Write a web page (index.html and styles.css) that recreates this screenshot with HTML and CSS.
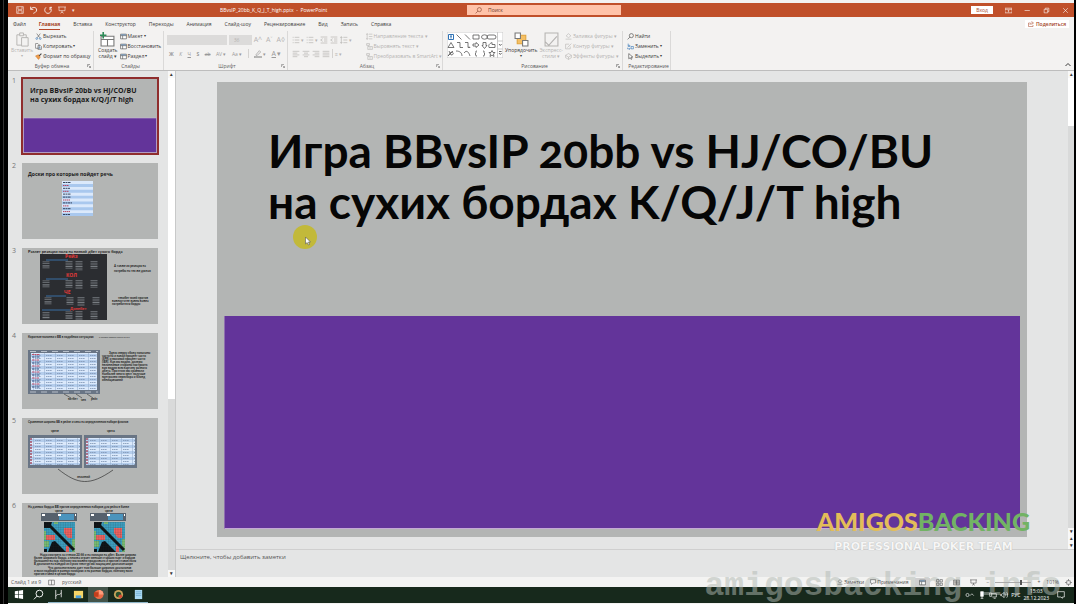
FILE: index.html
```html
<!DOCTYPE html>
<html lang="ru">
<head>
<meta charset="utf-8">
<title>BBvsIP_20bb_K_Q_J_T_high.pptx - PowerPoint</title>
<link rel="stylesheet" href="styles.css">
</head>
<body>
<svg class="defs" aria-hidden="true">
  <defs>
    <pattern id="rows" width="11" height="6" patternUnits="userSpaceOnUse">
      <rect width="11" height="3" fill="#dbe9fb"/><rect y="3" width="11" height="3" fill="#b4cdec"/>
      <path d="M2 1.500h6M2 4.500h6" stroke="#7e93b3" stroke-width=".8" stroke-dasharray="1.400 .4"/><path d="M.5 0v6" stroke="#8fa6c6" stroke-width=".5"/>
    </pattern>
    <pattern id="cells" width="2.400" height="2.400" patternUnits="userSpaceOnUse">
      <path d="M0 0h2.400M0 0v2.400" stroke="#1d2a30" stroke-width=".5" opacity=".5"/>
    </pattern>
    <symbol id="i-cut" viewBox="0 0 12 12"><path d="M3 1l5 7M9 1L4 8" stroke="#555"/><g stroke="#2f72b5"><circle cx="3" cy="9.500" r="1.500"/><circle cx="9" cy="9.500" r="1.500"/></g></symbol>
    <symbol id="i-copy" viewBox="0 0 12 12"><path d="M1 1h4l2 2v6H1zM5 4h4l2 2v5H5z" stroke="#555" fill="#fff"/><path d="M6.500 7h3M6.500 9h3" stroke="#2f72b5"/></symbol>
    <symbol id="i-brush" viewBox="0 0 12 12"><path d="M1 5l5-2 3 4-3 4z" fill="#ee9c4c" stroke="#d07a2a"/><path d="M7 5l4-4" stroke="#444" stroke-width="2"/></symbol>
    <symbol id="i-paste" viewBox="0 0 14 16"><path d="M4 3H1v11h5M8 3h3v3M4 1h4v3H4z"/><path d="M6 6h7v9H6z"/></symbol>
    <symbol id="i-new" viewBox="0 0 14 14"><path d="M1 4h12v9H1zM1 7h12M7 7v6" stroke="#777" fill="#fff"/><path d="M3 0v6M0 3h6" stroke="#2d8a57" stroke-width="1.500"/></symbol>
    <symbol id="i-layout" viewBox="0 0 12 12"><path d="M1 2h10v8H1zM1 4.500h10M4.500 4.500V10" stroke="#444" fill="#fff"/><path d="M2 3.200h8" stroke="#2f72b5"/></symbol>
    <symbol id="i-align" viewBox="0 0 12 12"><path d="M1 2h10M1 4.700h7M1 7.400h10M1 10h7"/></symbol>
    <symbol id="i-center" viewBox="0 0 12 12"><path d="M1 2h10M3 4.700h6M1 7.400h10M3 10h6"/></symbol>
    <symbol id="i-right" viewBox="0 0 12 12"><path d="M1 2h10M4 4.700h7M1 7.400h10M4 10h7"/></symbol>
    <symbol id="i-justify" viewBox="0 0 12 12"><path d="M1 2h10M1 4.700h10M1 7.400h10M1 10h10"/></symbol>
    <symbol id="i-list" viewBox="0 0 12 12"><path d="M4 2h7M4 6h7M4 10h7M1 2h1.500M1 6h1.500M1 10h1.500"/></symbol>
    <symbol id="i-indent" viewBox="0 0 12 12"><path d="M1 1.500h10M6 4.500h5M6 7.500h5M1 10.500h10M4 4L1 6l3 2"/></symbol>
    <symbol id="i-spacing" viewBox="0 0 12 12"><path d="M5 2h6M5 6h6M5 10h6M2 1v10M.5 3L2 1l1.500 2M.5 9L2 11l1.500-2"/></symbol>
    <symbol id="i-smart" viewBox="0 0 12 12"><path d="M1 1h5v3H1zM3 6h8v5H3zM5 8.500h4M4 4v2"/></symbol>
    <symbol id="i-arrange" viewBox="0 0 14 14"><path d="M3 3h8v8H3z" fill="#f5c065" stroke="#e0a53f"/><path d="M1 1h5v5H1zM8 8h5v5H8z" fill="#fff" stroke="#777"/></symbol>
    <symbol id="i-style" viewBox="0 0 14 14"><path d="M1 1h12v12H1zM4 13l8-9M1 9l4 4"/></symbol>
    <symbol id="i-fill" viewBox="0 0 12 12"><path d="M2 5l4-4 4 4-4 3zM1 10.500h10"/></symbol>
    <symbol id="i-outline" viewBox="0 0 12 12"><path d="M9 6v4H1V2h6M4 8l7-7"/></symbol>
    <symbol id="i-effect" viewBox="0 0 12 12"><path d="M1 4l5-3 5 3-5 3zM1 4v4l5 3 5-3V4M6 7v4"/></symbol>
    <symbol id="i-find" viewBox="0 0 12 12"><circle cx="7.500" cy="4.500" r="3.500"/><path d="M5 7l-4 4"/></symbol>
    <symbol id="i-replace" viewBox="0 0 12 12"><path d="M2 1v5M2 4h3v2H2M7 6h4v4H7zM1 8v2h4M4 8.500L5.500 10 4 11.500" stroke="#2f72b5"/></symbol>
    <symbol id="i-select" viewBox="0 0 12 12"><path d="M3 1v9l2.500-2L7 11l1.500-1L7 7h3z" fill="#fff"/></symbol>
    <symbol id="i-launch" viewBox="0 0 8 8"><path d="M1 6V1h5M3 3l4 4M7 4v3H4"/></symbol>
    <symbol id="i-pen" viewBox="0 0 12 12"><path d="M3 7l5-6 2 2-5 5H3z"/><path d="M0 10.500h12" stroke-width="2"/></symbol>
    <symbol id="i-screen" viewBox="0 0 12 12"><path d="M0 1.500h12M1.500 1.500V7h9V1.500M6 7v3M3.500 11L6 9l2.500 2"/></symbol>
  </defs>
</svg>

<div class="app">
  <header class="titlebar">
    <div class="quick">
      <button aria-label="Сохранить"><svg class="ic7" viewBox="0 0 12 12"><path d="M1 1h10v10H1zM3 1v4h6V1M3 11V7h6v4"/></svg></button>
      <button aria-label="Отменить"><svg class="ic7" viewBox="0 0 12 12"><path d="M1 1v4h4M1 5c2-4 9-4 9 1 0 3-3 4-5 5" stroke-width="1.500"/></svg></button>
      <button aria-label="Повторить"><svg class="ic7" viewBox="0 0 12 12"><path d="M3 2C-1 6 2 11 6 11s7-5 3-9M9 6V2h3" stroke-width="1.500"/></svg></button>
      <button aria-label="С начала"><svg class="ic7"><use href="#i-screen"/></svg></button>
      <button aria-label="Настройка панели">▾</button>
    </div>
    <div class="doc">BBvsIP_20bb_K_Q_J_T_high.pptx&nbsp; - &nbsp;PowerPoint</div>
    <label class="search"><svg class="ic6"><use href="#i-find"/></svg><input type="text" placeholder="Поиск" aria-label="Поиск"></label>
    <div class="win">
      <button class="login">Вход</button>
      <button aria-label="Параметры ленты"><svg class="ic6" viewBox="0 0 12 12"><path d="M0 2h12v8H0zM0 4h12M6 9V6M4.500 7L6 5.500 7.500 7"/></svg></button>
      <button aria-label="Свернуть"><svg class="ic6" viewBox="0 0 12 12"><path d="M1 6h9"/></svg></button>
      <button aria-label="Восстановить окно"><svg class="ic6" viewBox="0 0 12 12"><path d="M2 4h6v6H2zM4 4V2h6v6H8"/></svg></button>
      <button aria-label="Закрыть"><svg class="ic6" viewBox="0 0 12 12"><path d="M2 2l8 8M10 2l-8 8"/></svg></button>
    </div>
  </header>

  <nav class="tabs">
    <button>Файл</button><button class="on">Главная</button><button>Вставка</button><button>Конструктор</button><button>Переходы</button><button>Анимация</button><button>Слайд-шоу</button><button>Рецензирование</button><button>Вид</button><button>Запись</button><button>Справка</button>
    <button class="share"><svg class="ic5" viewBox="0 0 12 12"><path d="M5 4H1v7h9V8M4 8c0-3 2-4 5-4M7 1l4 3-4 3"/></svg>Поделиться</button>
  </nav>

  <section class="ribbon">
    <div class="group clip">
      <div class="body">
        <button class="big off"><svg class="ic14"><use href="#i-paste"/></svg><span>Вставить</span><i>▾</i></button>
        <div class="stack">
          <button><svg class="ic6"><use href="#i-cut"/></svg>Вырезать</button>
          <button><svg class="ic6"><use href="#i-copy"/></svg>Копировать <i>▾</i></button>
          <button><svg class="ic6"><use href="#i-brush"/></svg>Формат по образцу</button>
        </div>
      </div>
      <footer>Буфер обмена<svg class="launch"><use href="#i-launch"/></svg></footer>
    </div>
    <div class="group slides">
      <div class="body">
        <button class="big"><svg class="ic14"><use href="#i-new"/></svg><span>Создать<br>слайд ▾</span></button>
        <div class="stack">
          <button><svg class="ic6"><use href="#i-layout"/></svg>Макет <i>▾</i></button>
          <button><svg class="ic6"><use href="#i-layout"/></svg>Восстановить</button>
          <button><svg class="ic6"><use href="#i-layout"/></svg>Раздел <i>▾</i></button>
        </div>
      </div>
      <footer>Слайды</footer>
    </div>
    <div class="group font off">
      <div class="body two">
        <div class="line">
          <select class="face" aria-label="Шрифт"><option></option></select>
          <select class="size" aria-label="Размер шрифта"><option>36</option></select>
          <button class="l">A^</button><button class="l">A˅</button><button class="l">A◊</button>
        </div>
        <div class="line spread">
          <button><b>Ж</b></button><button><em>К</em></button><button><u>Ч</u></button><button><b>S</b></button><button><s>ab</s></button><button>AV ▾</button><button>Aa ▾</button><hr>
          <button><svg class="ic7"><use href="#i-pen"/></svg> ▾</button><button class="l"><u>A</u> ▾</button>
        </div>
      </div>
      <footer>Шрифт<svg class="launch"><use href="#i-launch"/></svg></footer>
    </div>
    <div class="group para off">
      <div class="body">
        <div class="two">
          <div class="line">
            <button><svg class="ic7"><use href="#i-list"/></svg> ▾</button><button><svg class="ic7"><use href="#i-list"/></svg> ▾</button><button><svg class="ic7"><use href="#i-indent"/></svg></button><button><svg class="ic7"><use href="#i-indent"/></svg></button><button><svg class="ic7"><use href="#i-spacing"/></svg> ▾</button>
          </div>
          <div class="line">
            <button><svg class="ic7"><use href="#i-align"/></svg></button><button><svg class="ic7"><use href="#i-center"/></svg></button><button><svg class="ic7"><use href="#i-right"/></svg></button><button><svg class="ic7"><use href="#i-justify"/></svg></button><hr><button>≡ ▾</button>
          </div>
        </div>
        <div class="stack">
          <button><svg class="ic6"><use href="#i-spacing"/></svg>Направление текста ▾</button>
          <button><svg class="ic6"><use href="#i-smart"/></svg>Выровнять текст ▾</button>
          <button><svg class="ic6"><use href="#i-smart"/></svg>Преобразовать в SmartArt ▾</button>
        </div>
      </div>
      <footer>Абзац<svg class="launch"><use href="#i-launch"/></svg></footer>
    </div>
    <div class="group draw">
      <div class="body">
        <svg class="gallery" viewBox="0 0 56 26" role="img" aria-label="Фигуры">
          <path d="M0 0h56v26H0z" fill="#fff" stroke="#c9c9c9"/>
          <path d="M1.500 2.500h5v5h-5zM3 4h2M4 4v2.500" stroke="#2f72b5"/>
          <path d="M9.500 2.500l5 5M18 2.500l5 5M26 3h6v4h-6zM42 3h5a2 2 0 010 4h-5a2 2 0 010-4zM4 10.500l3 5H1zM10 10.500h3v5h3M18 10.500h3v5h2l-1-1M26 12h3v-1.500l3 2.500-3 2.500V14h-3zM36 10.500h3v3h1l-2.500 3-2.500-3h1zM42 15.500c-1-3 1-4 3-5v2h3v3zM2 19l2 4c3 0 3-3 0-3l-3 4M6 19l-5 5M9 19c4 0 6 2 6 5M17 21c3-4 5 0 6 3M30 19c-2 0-1 1-1 2l-1 1 1 1c0 1-1 1 1 1M36 19c2 0 1 1 1 2l1 1-1 1c0 1 1 1-1 1M45 18.500l1 2h2l-1.500 1.500.5 2.500-2-1.500-2 1.500.5-2.500L42 20.500h2z" stroke="#555" stroke-width=".8"/>
          <ellipse cx="37.500" cy="5" rx="3" ry="2.200" stroke="#555" stroke-width=".8"/>
          <path d="M50.500 0v26M50.500 9H56M50.500 17H56" stroke="#c9c9c9"/><path d="M52 12l1.300 1.500L54.600 12M52 21l1.300 1.500L54.600 21M52 19.500h2.600" stroke="#444" stroke-width=".8"/>
        </svg>
        <button class="big"><svg class="ic14"><use href="#i-arrange"/></svg><span>Упорядочить</span><i>▾</i></button>
        <button class="big off"><svg class="ic14"><use href="#i-style"/></svg><span>Экспресс-<br>стили ▾</span></button>
        <div class="stack off">
          <button><svg class="ic6"><use href="#i-fill"/></svg>Заливка фигуры ▾</button>
          <button><svg class="ic6"><use href="#i-outline"/></svg>Контур фигуры ▾</button>
          <button><svg class="ic6"><use href="#i-effect"/></svg>Эффекты фигуры ▾</button>
        </div>
      </div>
      <footer>Рисование<svg class="launch"><use href="#i-launch"/></svg></footer>
    </div>
    <div class="group edit">
      <div class="body">
        <div class="stack">
          <button><svg class="ic6"><use href="#i-find"/></svg>Найти</button>
          <button><svg class="ic6"><use href="#i-replace"/></svg>Заменить <i>▾</i></button>
          <button><svg class="ic6"><use href="#i-select"/></svg>Выделить <i>▾</i></button>
        </div>
      </div>
      <footer>Редактирование</footer>
    </div>
    <button class="collapse" aria-label="Свернуть ленту"><svg class="ic5" viewBox="0 0 12 12"><path d="M1 8l5-5 5 5" stroke-width="2"/></svg></button>
  </section>

  <main class="work">
    <aside class="panel">
      <ol class="thumbs">
        <li><span>1</span>
          <svg class="thumb on" viewBox="0 0 136 76"><path class="paper" d="M0 0h136v76H0z"/>
            <text class="t7" x="8" y="15">Игра BBvsIP 20bb vs HJ/CO/BU</text><text class="t7" x="8" y="24">на сухих бордах K/Q/J/T high</text>
            <path d="M1.500 40h133v34.500h-133z" fill="#63349a" stroke="#c9b5d6" stroke-width=".6"/></svg></li>
        <li><span>2</span>
          <svg class="thumb" viewBox="0 0 136 76"><path class="paper" d="M0 0h136v76H0z"/>
            <text class="t5" x="6" y="13">Доски про которые пойдет речь</text>
            <path d="M40 18h31v35H40z" fill="#dbe9fb"/><path d="M40 22.500h31M40 28.300h31M40 34.100h31M40 39.900h31M40 45.700h31M40 51.500h31" stroke="#a9c8ee" stroke-width="2.900"/>
            <path d="M41 19.500h8M41 25.300h7M41 31.100h8M41 34.100h8M41 39.900h9M41 45.700h8M41 51.500h7" stroke="#34435c" stroke-dasharray="2 .5"/><path d="M41 22.500h6M41 28.300h6M41 37h7M41 42.900h6M41 48.600h7" stroke="#b3435c" stroke-dasharray="1.500 .5"/></svg></li>
        <li><span>3</span>
          <svg class="thumb" viewBox="0 0 136 76"><path class="paper" d="M0 0h136v76H0z"/>
            <text class="t4" x="6" y="5">Разлет реакции поля на низкий дбет сухого борда</text>
            <path d="M18 6h67v66H18z" fill="#2b2d31"/>
            <text class="t5 red" x="43" y="10">Рейз</text><text class="t5 red" x="44" y="29">КОЛ</text><text class="t5 red" x="42" y="46">ЧЕ</text><text class="t4 red" x="48" y="62">Доннбет</text>
            <path d="M24 12h22M24 31h22M24 48h20M20 62h28" stroke="#3d7fc0" stroke-width=".8"/>
            <path d="M24 13.500v7M47 13v8M57 13v10M72 13v8M24 32.500v7M47 32v8M57 32v9M72 32v8M26 49.500v7M48 49v8M59 49v9M74 49v8M24 64v7M47 63.500v8M57 63v9M72 63v8" stroke="#aab0b8" stroke-width="7" stroke-dasharray=".8 .9" opacity=".6"/>
            <text class="t3" x="92" y="19">А также их реакция на</text><text class="t3" x="92" y="24">потребы на тех же досках</text><text class="t3" x="96" y="51">текибет моей против</text><text class="t3" x="90" y="54">важности не важна важна</text><text class="t3" x="90" y="57">потребителя борды</text></svg></li>
        <li><span>4</span>
          <svg class="thumb" viewBox="0 0 136 76"><path class="paper" d="M0 0h136v76H0z"/>
            <text class="t3" x="6" y="5">Короткие колонки с ВВ в подобных ситуациях</text><text class="t2" x="77" y="5">в пример возможностей из SPR</text>
            <path d="M6 17h72v44H6z" fill="#697585"/><path d="M9 20h66v37H9z" fill="url(#rows)"/><path d="M10 21.500h8M10 27h7M10 33h8M10 39h8M10 45h7M10 51h8" stroke="#c35068" stroke-dasharray="2 .5"/><path d="M10 24h8M10 30h8M10 36h7M10 42h8M10 48h8M10 54h8" stroke="#2e4b7c" stroke-dasharray="2 .5"/>
            <path d="M8 18.500h68M8 59h68" stroke="#ccd2da" stroke-width=".8" stroke-dasharray="6 5"/><path d="M42 61l7 4M54 61l6 4M65 61l6 4" stroke="#333" stroke-width=".6"/>
            <text class="t3" x="46" y="67">котбет</text><text class="t3" x="59" y="68">чек</text><text class="t3" x="69" y="67">рейз</text>
            <text class="t3" x="87" y="21">Здесь сверху сбоку показаны</text><text class="t3" x="80" y="24">частоты и какой процент часто</text><text class="t3" x="80" y="27">(SPR) и высокой процент части</text><text class="t3" x="80" y="30">(IBR). Как мы видим, дилеры</text><text class="t3" x="80" y="33">нелинейные стороны построить</text><text class="t3" x="80" y="36">вам видим всю картину разного</text><text class="t3" x="80" y="39">дбета. При этом мы сравнили</text><text class="t3" x="80" y="42">наиболее много мест получше</text><text class="t3" x="80" y="45">контролем пересбора и блинд</text><text class="t3" x="80" y="48">обнищавшими</text></svg></li>
        <li><span>5</span>
          <svg class="thumb" viewBox="0 0 136 76"><path class="paper" d="M0 0h136v76H0z"/>
            <text class="t3" x="6" y="5">Сравнение ширины ББ в рейзе и чека на определенном наборе флопов</text>
            <text class="t3" x="29" y="14">чрезе</text><text class="t3" x="85" y="14">чреза</text>
            <path d="M6 17h54v33H6zM62 17h53v33H62z" fill="#697585"/><path d="M8 20h50v27H8zM64 20h49v27H64z" fill="url(#rows)"/><path d="M9 20v27M65 20v27" stroke="#a34d63" stroke-width="1.500" stroke-dasharray="2 1"/>
            <path d="M36 51c20 16 32 17 55 1" stroke="#333" stroke-width=".7"/><text class="t3" x="55" y="60">значений</text></svg></li>
        <li><span>6</span>
          <svg class="thumb" viewBox="0 0 136 76"><path class="paper" d="M0 0h136v76H0z"/>
            <text class="t3" x="6" y="5">На данных бордах ВВ против определенных наборов для рейза в банке</text>
            <path d="M19 10h36v8H19zM68 10h36v8H68z" fill="#56616d"/><path d="M37 11h15v6H37zM86 11h15v6H86z" fill="#4b94bd"/><path d="M20 12h3M36 12h3M53 12h1M69 12h3M85 12h3M102 12h1" stroke="#fff" stroke-width="2"/>
            <text class="t3" x="33" y="9">чрезе</text><text class="t3" x="83" y="9">чрезе</text>
            <g id="range"><path d="M22 19h31v30H22z" fill="#3d9fc0"/><path d="M22 19h8l-2 6h-6zM33 38l11 11H26l2-5 2-5zM22 46h3v3h-3z" fill="#0d1114"/><path d="M42 25h8v10h-4l-4-5zM24 32h9v5h-9zM44 43h3v6h-3z" fill="#f0625f"/><path d="M22 38h5v6h-5zM50 36h3v13h-3zM22 28h2v9h-2zM32 19h4v2h-4z" fill="#79bd73"/><path d="M27 22l25 25" stroke="#0d1114" stroke-width="3"/><path d="M22 19h31v30H22z" fill="url(#cells)"/></g>
            <use href="#range" x="50"/>
            <text class="t3" x="18" y="53">Надо смотреть за стеком 20 бб и на позиции на дбет. Более широко</text><text class="t3" x="12" y="56">более широкого борда, а кнопка играет меньше старших карт и бордов</text><text class="t3" x="12" y="59">большинства пар, поэтому мы можем продолжать и против ставок поля</text><text class="t3" x="12" y="62">В диапазон на каждой из сухих текстур мы защищаем диапазон шире</text><text class="t3" x="26" y="66">Что дополнительно дает нам больше широких диапазонов</text><text class="t3" x="12" y="69">и колл подборы в разных позициях и на разных бордах, поэтому колл</text><text class="t3" x="12" y="72">против ставки в целом борда</text></svg></li>
      </ol>
      <div class="scroll"><b>▴</b><i></i><b>▾</b></div>
    </aside>

    <section class="editor">
      <div class="stage">
        <article class="slide">
          <h1>Игра BBvsIP 20bb vs HJ/CO/BU<br>на сухих бордах K/Q/J/T high</h1>
          <div class="block"></div>
        </article>
        <div class="vscroll"><b>▴</b><i></i><span></span><b>▾</b><b>▴</b><b>▾</b></div>
      </div>
      <div class="notes">Щелкните, чтобы добавить заметки</div>
    </section>
  </main>

  <div class="status">
    <span>Слайд 1 из 9</span>
    <svg class="ic6" viewBox="0 0 12 12"><path d="M1 2h10v8H1zM6 2v8"/></svg>
    <span>русский</span>
    <div class="right">
      <button><svg class="ic5"><use href="#i-fill"/></svg>Заметки</button>
      <button><svg class="ic5" viewBox="0 0 12 12"><path d="M1 1h10v7H6l-3 3V8H1z"/></svg>Примечания</button>
      <div class="views">
        <button class="on" aria-label="Обычный"><svg class="ic6"><use href="#i-layout"/></svg></button>
        <button aria-label="Сортировщик"><svg class="ic6" viewBox="0 0 12 12"><path d="M1 1h4v4H1zM7 1h4v4H7zM1 7h4v4H1zM7 7h4v4H7z"/></svg></button>
        <button aria-label="Чтение"><svg class="ic6" viewBox="0 0 12 12"><path d="M1 2h10v8H1zM6 2v8M2 5h8M2 7h8"/></svg></button>
        <button aria-label="Слайд-шоу"><svg class="ic6"><use href="#i-screen"/></svg></button>
      </div>
      <span>−</span><input type="range" value="72" aria-label="Масштаб"><span>+</span><span>101%</span>
      <svg class="ic6" viewBox="0 0 12 12"><path d="M3 3h6v6H3zM6 0v3M6 9v3M0 6h3M9 6h3"/></svg>
    </div>
  </div>
</div>

<footer class="taskbar">
  <div class="apps">
    <button aria-label="Пуск"><svg viewBox="0 0 12 12"><path d="M2 2.500L5.500 2v3.700H2zM6.200 1.900L11 1v4.700H6.200zM2 6.300h3.500V10L2 9.500zM6.200 6.300H11V11l-4.800-.9z" fill="#fff" stroke="none"/></svg></button>
    <button aria-label="Поиск"><svg viewBox="0 0 12 12"><circle cx="7" cy="5" r="3.700" stroke="#fff"/><path d="M4.500 7.700L1 11.300" stroke="#fff"/></svg></button>
    <button class="run" aria-label="Hand2Note"><svg viewBox="0 0 12 12"><path d="M3 1v10M3 8c2-4 4 0 6-4M9 1v8" stroke="#ddd"/></svg></button>
    <button class="run" aria-label="Проводник"><svg viewBox="0 0 12 12"><path d="M1 2h10v8H1z" fill="#f7d667" stroke="none"/><path d="M3 7h6v3H3z" fill="#4ba0dc" stroke="none"/></svg></button>
    <button class="run on" aria-label="PowerPoint"><svg viewBox="0 0 12 12"><circle cx="6.500" cy="6" r="5" fill="#ed6c47" stroke="none"/><path d="M6.500 1a5 5 0 015 5h-5z" fill="#ff9c7c" stroke="none"/><path d="M1 3.500h5v5H1z" fill="#c43e1c" stroke="none"/></svg></button>
    <button class="run" aria-label="Запись экрана"><svg viewBox="0 0 12 12"><circle cx="6" cy="6" r="5" fill="#c7a45a" stroke="none"/><circle cx="6" cy="6" r="3" fill="#27502c" stroke="none"/><circle cx="8" cy="8" r="2" fill="#d84a35" stroke="none"/></svg></button>
    <button class="run" aria-label="Блокнот"><svg viewBox="0 0 12 12"><path d="M2 1h8v10H2z" fill="#a9d8f2" stroke="none"/><path d="M3 3h6M3 5h6M3 7h6" stroke="#5c9cc4" stroke-width=".6"/></svg></button>
  </div>
  <div class="tray">
    <svg viewBox="0 0 16 12"><circle cx="4" cy="6" r="2.500"/><path d="M8 7l3-3 3 3"/></svg>
    <svg class="ic8" viewBox="0 0 12 12"><path d="M4 1h4v7H4z" fill="#fff"/><path d="M6 8v3M4 11h4"/></svg>
    <svg class="ic8" viewBox="0 0 12 12"><path d="M1 3h3v5H1zM4 4h7v5H5M7 11h3"/></svg>
    <svg class="ic8" viewBox="0 0 12 12"><path d="M1 5h2l3-3v8L3 7H1zM8 4c1 1 1 3 0 4M10 2c2 2 2 6 0 8"/></svg>
    <span>РУС</span>
    <time>15:03<br>28.12.2023</time>
    <svg class="ic8 bell" viewBox="0 0 12 12"><path d="M1 1h10v8H8v2L6 9H1z"/></svg>
  </div>
</footer>

<div class="brand"><div class="logo"><span>AMIGOS</span><span class="green">BACKING</span></div><div class="team">PROFESSIONAL POKER TEAM</div></div>
<div class="site">amigosbacking info</div>
<svg class="pointer" viewBox="0 0 24 24"><circle cx="12" cy="12" r="12" fill="#c2b93a"/><path d="M12.500 12v7l1.700-1.500L15.500 20l1-.5-1-2.500h2z" fill="#fff" stroke="#555" stroke-width=".6"/></svg>
</body>
</html>
```

FILE: styles.css
```css
* { box-sizing: border-box; }
body {
  margin: 0;
  height: 100vh;
  padding: 3px 2px 1px 8px;
  display: flex;
  flex-direction: column;
  overflow: hidden;
  position: relative;
  background: linear-gradient(90deg, #000 0 3px, #333 3px 4px, #000 4px 8px, #f3f2f1 8px calc(100% - 2px), #000 calc(100% - 2px));
  font-family: "Open Sans", "Noto Sans", sans-serif;
  font-size: 5px;
  line-height: 6px;
  color: #3b3a39;
}
button, select, input {
  font: inherit;
  color: inherit;
  background: none;
  border: 0;
  padding: 0;
  margin: 0;
  appearance: none;
}
button { display: flex; align-items: center; gap: 1px; white-space: nowrap; }
i { font-style: normal; font-size: 4px; }
svg { fill: none; stroke: currentColor; flex: none; }
.defs { position: absolute; width: 0; height: 0; stroke: none; }
.ic5 { width: 6px; height: 6px; }
.ic6 { width: 7px; height: 7px; }
.ic7 { width: 8px; height: 8px; }
.ic8 { width: 8px; height: 8px; }
.ic14 { width: 15px; height: 15px; }

.app { flex: 1; min-height: 0; display: flex; flex-direction: column; }

.titlebar {
  height: 14px;
  display: grid;
  grid-template-columns: 212px 247px 154px 1fr;
  align-items: center;
  background: #c0502a;
  color: #fff;
}
.quick { display: flex; gap: 6px; padding-left: 8px; opacity: .85; }
.search {
  height: 10px;
  display: flex;
  align-items: center;
  gap: 6px;
  padding-left: 8px;
  background: #ffc3a9;
  color: #7d3a24;
}
.search input { flex: 1; min-width: 0; }
.search input::placeholder { color: #6b3a2b; opacity: 1; }
.win { display: flex; justify-content: flex-end; align-items: center; gap: 12px; padding-right: 5px; }
.login { height: 8px; padding: 0 5px; background: #fff; color: #a8472a; }

.tabs { height: 14px; display: flex; align-items: center; gap: 13px; padding: 0 5px 0 5px; }
.tabs button { height: 11px; border-bottom: 1px solid transparent; }
.tabs .on { font-weight: 700; color: #a33f1e; border-color: #b7472a; }
.tabs .share { margin-left: auto; height: 8px; padding: 0 3px; gap: 2px; background: #fff; color: #a33f1e; font-weight: 600; }

.ribbon { height: 40px; display: flex; border-bottom: 1px solid #bdbdbd; }
.group {
  display: grid;
  grid-template-rows: 30px 9px;
  border-right: 1px solid #dad9d8;
  padding-left: 4px;
}
.group footer { display: flex; justify-content: center; align-items: center; position: relative; color: #555; }
.launch { position: absolute; right: 2px; width: 4px; height: 4px; }
.clip { width: 86px; padding-left: 3px; }
.slides { width: 70px; }
.font { width: 124px; padding-left: 3px; }
.para { width: 155px; }
.draw { width: 180px; }
.edit { width: 48px; }
.body { display: flex; gap: 2px; min-width: 0; }
.stack { display: grid; grid-template-rows: repeat(3, 10px); }
.big { flex-direction: column; justify-content: flex-start; gap: 0; padding-top: 1px; line-height: 6px; }
.off, .off footer { color: #b5b3b1; }
.font.off footer, .para.off footer { color: #666; }
.two { display: flex; flex-direction: column; gap: 3px; padding-top: 3px; }
.line { display: flex; align-items: center; height: 11px; gap: 2px; }
.font .line:first-child button { padding-right: 2px; }
.spread { justify-content: space-between; padding: 0 6px 0 2px; }
.line hr { width: 1px; height: 9px; margin: 0; border: 0; background: #d4d2d0; }
.line .l { font-size: 7px; }
.face { width: 60px; height: 10px; background: #dcdbda; }
.size { width: 23px; height: 10px; padding-left: 5px; background: #dcdbda; }
.spread { color: #999; }
.para .two { width: 72px; }
.gallery { width: 56px; height: 26px; margin-top: 1px; }
.collapse { margin: auto 3px 2px auto; }

.work { flex: 1; min-height: 0; display: flex; background: #e4e5e5; }
.panel { width: 168px; display: flex; border-right: 1px solid #c8c9c9; overflow: hidden; }
.thumbs { flex: 1; list-style: none; margin: 0; padding: 7px 9px 0 4px; display: flex; flex-direction: column; gap: 9px; }
.thumbs li { display: flex; gap: 4px; }
.thumbs span { width: 6px; font-size: 7px; line-height: 6px; color: #777; }
.thumb { width: 136px; height: 76px; stroke: none; }
.thumb.on { outline: 2px solid #8f2d2d; outline-offset: -1px; }
.paper { fill: #b3b5b4; }
.thumb text { fill: #1b1b1b; }
.thumb .t7 { font: 700 7px "Open Sans", sans-serif; }
.thumb .t5 { font: 700 5px "Open Sans", sans-serif; }
.thumb .t4 { font: 700 4px Lato, sans-serif; }
.thumb .t3 { font: 700 3px Lato, sans-serif; }
.thumb .t2 { font: 2px "Open Sans", sans-serif; }
.thumb text.red { fill: #e23a3a; }
.scroll { width: 7px; display: flex; flex-direction: column; background: #d9dada; }
.scroll b, .vscroll b { height: 7px; line-height: 7px; text-align: center; background: #f8f8f8; font-size: 5px; }
.scroll i { height: 321px; background: #fff; }
.scroll b:last-child { margin-top: auto; }

.editor { flex: 1; min-width: 0; display: flex; flex-direction: column; }
.stage { flex: 1; min-height: 0; display: flex; }
.slide {
  flex: 1;
  margin: 11px 41px 12px;
  padding: 0 7px 8px;
  display: flex;
  flex-direction: column;
  background: #b3b5b4;
}
.slide h1 {
  flex: 1;
  margin: 0;
  padding: 43px 0 0 44px;
  font: 700 46px/51px Lato, sans-serif;
  font-feature-settings: "onum";
  white-space: nowrap;
  color: #060606;
}
.block { height: 213px; background: #63349a; border-bottom: 1px solid #c5a9d6; border-left: 1px solid #8f6fae; }
.vscroll { width: 6px; display: flex; flex-direction: column; background: #d9dada; }
.vscroll i { height: 48px; background: #fff; }
.vscroll span { flex: 1; }
.notes { height: 28px; padding: 3px 4px; border-top: 1px solid #cfcfcf; font-size: 6px; line-height: 8px; color: #555; }

.status { height: 10px; display: flex; align-items: center; gap: 7px; padding: 0 2px 0 3px; background: #f3f3f2; color: #555; }
.right { margin-left: auto; display: flex; align-items: center; gap: 6px; position: relative; z-index: 2; }
.views { display: flex; gap: 2px; }
.views button { width: 15px; height: 9px; justify-content: center; }
.views .on { background: #cfcfcf; }
.status input { width: 36px; height: 8px; }
.status input::-webkit-slider-runnable-track { height: 1px; background: #aaa; }
.status input::-webkit-slider-thumb { appearance: none; width: 2px; height: 5px; margin-top: -2px; background: #555; }

.taskbar { height: 16px; display: flex; justify-content: space-between; background: #17291c; color: #fff; }
.apps { display: flex; }
.apps button { width: 20px; justify-content: center; border-bottom: 1px solid transparent; }
.apps svg { width: 11px; height: 11px; }
.apps .run { border-color: #8fb6c9; }
.apps .on { background: #43544a; }
.tray { display: flex; align-items: center; gap: 3px; padding-right: 9px; position: relative; z-index: 2; }
.tray svg:first-child { width: 10px; height: 8px; }
.tray time { text-align: center; line-height: 7px; }
.tray .bell { margin-left: 5px; }

.brand { position: absolute; right: 46px; bottom: 50px; text-align: center; white-space: nowrap; }
.logo { font: 900 25px/28px Lato, sans-serif; color: #e3bd58; }
.green { color: #72b364; }
.team { font: 700 11px/14px "DejaVu Sans", sans-serif; margin-top: 5px; color: #f6f6f6; text-shadow: 0 0 1px #aaa; }
.site { position: absolute; right: 15px; bottom: 0; font: 700 33px/34px "Liberation Mono", monospace; color: #b1b8b2; opacity: .5; }
.pointer { position: absolute; left: 293px; top: 225px; width: 24px; height: 24px; stroke: none; }
```
